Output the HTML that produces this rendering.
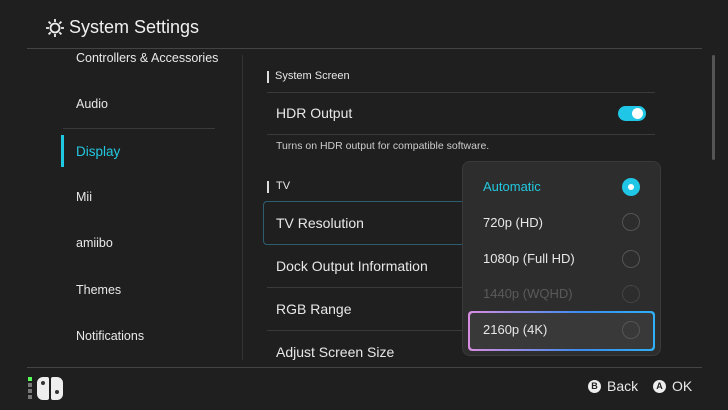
<!DOCTYPE html>
<html><head><style>
*{margin:0;padding:0;box-sizing:border-box}
body{width:728px;height:410px;background:#1f1f1f;font-family:"Liberation Sans",sans-serif;color:#e8e8e8;position:relative;overflow:hidden}
.a{position:absolute;white-space:nowrap}
.hl{position:absolute;height:1px;background:#3a3a3a}
.side{font-size:12.5px;left:76px}
.r{font-size:14px;left:276px}
.radio{position:absolute;left:622px;width:18px;height:18px;border:1.5px solid #555;border-radius:50%}
</style></head><body>
<svg class="a" style="left:45px;top:18px" width="20" height="20" viewBox="0 0 20 20"><g stroke="#eee" stroke-width="1.8" fill="none"><circle cx="10" cy="10" r="4.5"/><path d="M10 1v3M10 16v3M1 10h3M16 10h3M3.6 3.6l2.1 2.1M14.3 14.3l2.1 2.1M3.6 16.4l2.1-2.1M14.3 5.7l2.1-2.1"/></g></svg>
<div class="a" style="left:69px;top:17px;font-size:18px;color:#f0f0f0">System Settings</div>
<div class="hl" style="left:27px;top:48px;width:675px;background:#444"></div>
<div class="hl" style="left:27px;top:367px;width:675px;background:#444"></div>
<div class="a" style="left:242px;top:55px;width:1px;height:305px;background:#333"></div>
<div class="a" style="left:712px;top:55px;width:3px;height:105px;background:#555;border-radius:2px"></div>

<div class="a side" style="top:51px">Controllers &amp; Accessories</div>
<div class="a side" style="top:97px">Audio</div>
<div class="hl" style="left:63px;top:128px;width:152px"></div>
<div class="a" style="left:61px;top:135px;width:3px;height:32px;background:#1fc8e3"></div>
<div class="a side" style="top:144px;color:#22c8e0;font-size:13.5px">Display</div>
<div class="a side" style="top:190px">Mii</div>
<div class="a side" style="top:236px">amiibo</div>
<div class="a side" style="top:283px">Themes</div>
<div class="a side" style="top:329px">Notifications</div>

<div class="a" style="left:267px;top:71px;width:2px;height:12px;background:#ddd"></div>
<div class="a" style="left:275px;top:70px;font-size:11px">System Screen</div>
<div class="hl" style="left:267px;top:92px;width:388px"></div>
<div class="a r" style="top:105px">HDR Output</div>
<div class="a" style="left:618px;top:106px;width:28px;height:15px;border-radius:8px;background:#1fc6e6"></div>
<div class="a" style="left:632px;top:108px;width:11px;height:11px;border-radius:50%;background:#fff"></div>
<div class="hl" style="left:267px;top:134px;width:388px"></div>
<div class="a" style="left:276px;top:140px;font-size:10.5px;color:#ccc">Turns on HDR output for compatible software.</div>
<div class="a" style="left:267px;top:181px;width:2px;height:12px;background:#ddd"></div>
<div class="a" style="left:276px;top:180px;font-size:11px">TV</div>
<div class="a" style="left:263px;top:201px;width:220px;height:44px;border:1.5px solid #2c5e70;border-radius:4px"></div>
<div class="a r" style="top:215px">TV Resolution</div>
<div class="hl" style="left:267px;top:287px;width:200px"></div>
<div class="hl" style="left:267px;top:330px;width:200px"></div>
<div class="a r" style="top:258px">Dock Output Information</div>
<div class="a r" style="top:301px">RGB Range</div>
<div class="a r" style="top:344px">Adjust Screen Size</div>

<div class="a" style="left:462px;top:161px;width:199px;height:195px;background:#2d2d2d;border:1px solid #3a3a3a;border-radius:8px"></div>
<div class="a" style="left:483px;top:179px;font-size:13px;color:#22c8e0">Automatic</div>
<div class="a" style="left:622px;top:178px;width:18px;height:18px;border-radius:50%;background:#1fc6e6"></div>
<div class="a" style="left:628px;top:184px;width:6px;height:6px;border-radius:50%;background:#fff"></div>
<div class="a" style="left:483px;top:215px;font-size:13px">720p (HD)</div><div class="radio" style="top:213px"></div>
<div class="a" style="left:483px;top:251px;font-size:13px">1080p (Full HD)</div><div class="radio" style="top:250px"></div>
<div class="a" style="left:483px;top:286px;font-size:13px;color:#5a5a5a">1440p (WQHD)</div><div class="radio" style="top:285px;border-color:#444"></div>
<div class="a" style="left:468px;top:311px;width:187px;height:40px;border-radius:4px;padding:2px;background:linear-gradient(90deg,#d98de0,#3b8cf0 60%,#2fb0f5)"><div style="width:100%;height:100%;background:#393939;border-radius:3px"></div></div>
<div class="a" style="left:483px;top:322px;font-size:13px">2160p (4K)</div><div class="radio" style="top:321px"></div>

<div class="a" style="left:28px;top:377px;width:4px;height:4px;background:#5f5"></div>
<div class="a" style="left:28px;top:383px;width:4px;height:4px;background:#777"></div>
<div class="a" style="left:28px;top:389px;width:4px;height:4px;background:#777"></div>
<div class="a" style="left:28px;top:395px;width:4px;height:4px;background:#777"></div>
<div class="a" style="left:37px;top:377px;width:12px;height:23px;background:#eee;border-radius:6px 2px 2px 6px"></div>
<div class="a" style="left:51px;top:377px;width:12px;height:23px;background:#eee;border-radius:2px 6px 6px 2px"></div>
<div class="a" style="left:41px;top:381px;width:4px;height:4px;border-radius:50%;background:#333"></div>
<div class="a" style="left:55px;top:390px;width:4px;height:4px;border-radius:50%;background:#333"></div>

<div class="a" style="left:588px;top:380px;width:13px;height:13px;border-radius:50%;background:#eee;color:#222;font-size:9px;font-weight:bold;text-align:center;line-height:13px">B</div>
<div class="a" style="left:607px;top:378px;font-size:14px">Back</div>
<div class="a" style="left:653px;top:380px;width:13px;height:13px;border-radius:50%;background:#eee;color:#222;font-size:9px;font-weight:bold;text-align:center;line-height:13px">A</div>
<div class="a" style="left:672px;top:378px;font-size:14px">OK</div>
</body></html>
